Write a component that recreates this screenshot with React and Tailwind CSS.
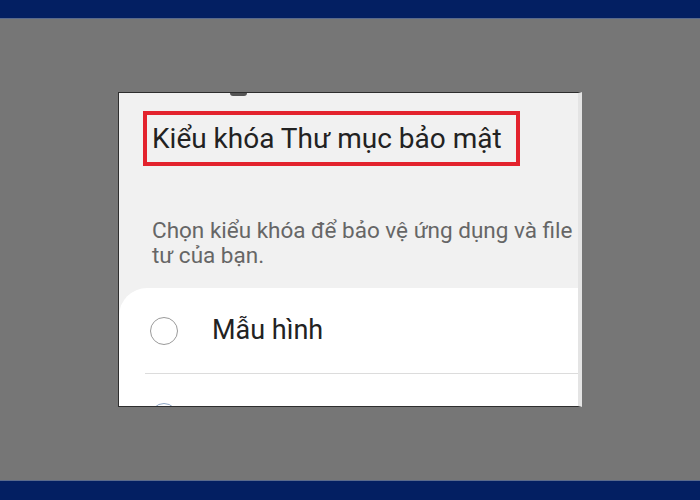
import React from 'react';

const font = { fontFamily: 'Roboto, "Noto Sans", sans-serif' };

const App = () => {
  return (
    <div className="w-[700px] h-[500px] flex flex-col bg-[#767676]" style={font}>
      <div className="h-[19px] shrink-0 bg-[#031f62] border-b border-[#5a6a8c]" />
      <div className="flex-1 pt-[73px] pl-[118px]">
        <div className="w-[464px] h-[315px] bg-[#f1f1f1] border-t border-l border-b border-[#2e2e2e] border-r-4 border-r-[#e4e4e4] overflow-hidden flex flex-col">
          <div className="shrink-0 ml-[111px] w-[17px] h-[3px] rounded-b bg-[#555]" />
          <div className="shrink-0 ml-[24px] mt-[15px] w-[377px] h-[55px] border-4 border-[#e3232d] flex items-center pl-[5px]">
            <span className="text-[28px] leading-none text-[#222] whitespace-nowrap">Kiểu khóa Thư mục bảo mật</span>
          </div>
          <div className="shrink-0 ml-[33px] mt-[52px] text-[22.5px] leading-[25px] text-[#666] whitespace-nowrap">
            <div>Chọn kiểu khóa để bảo vệ ứng dụng và file riêng</div>
            <div>tư của bạn.</div>
          </div>
          <div className="shrink-0 mt-[20px] h-[200px] bg-white rounded-tl-[28px]">
            <div className="h-[85px] flex items-center pl-[31px]">
              <div className="w-[28px] h-[28px] rounded-full border-[1.5px] border-[#9a9a9a]" />
              <span className="ml-[34px] text-[27px] text-[#222]">Mẫu hình</span>
            </div>
            <div className="ml-[26px] h-px bg-[#dcdcdc]" />
            <div className="pl-[31px] pt-[29px]">
              <div className="w-[28px] h-[28px] rounded-full border-[1.5px] border-[#8fa6c4]" />
            </div>
          </div>
        </div>
      </div>
      <div className="h-[20px] shrink-0 bg-[#031f62] border-t border-[#5a6a8c]" />
    </div>
  );
};

export default App;
